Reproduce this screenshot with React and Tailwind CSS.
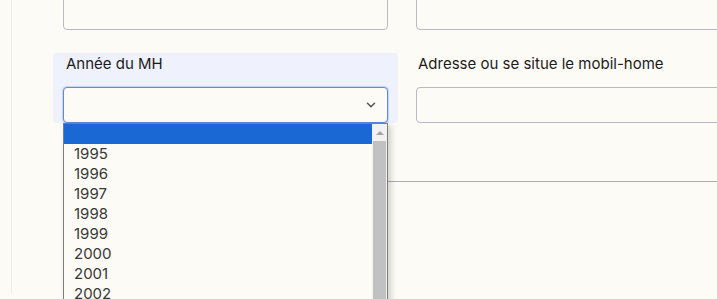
import { ChevronDown } from "lucide-react";

const years = ["", "1995", "1996", "1997", "1998", "1999", "2000", "2001", "2002", "2003", "2004"];

const App = () => {
  return (
    <div className="h-[299px] w-[717px] overflow-hidden bg-[#fcfbf5] font-['Inter','Noto_Sans',sans-serif] text-[15px] text-[#1c1c1c]">
      <div className="ml-[11px] h-full border-l border-[#efeee6] pl-[41px]">
        {/* top row */}
        <div className="-mt-[6px] flex gap-[8px]">
          <div className="w-[345px] shrink-0 px-[10px]">
            <div className="h-[36px] rounded-[4px] border border-[#b9b9c3] bg-[#fcfbf5]"></div>
          </div>
          <div className="w-[345px] shrink-0 px-[10px]">
            <div className="h-[36px] rounded-[4px] border border-[#b9b9c3] bg-[#fcfbf5]"></div>
          </div>
        </div>

        {/* second row */}
        <div className="mt-[23px] flex gap-[8px]">
          <div className="relative w-[345px] shrink-0 rounded-[3px] bg-[#eff2fc] px-[10px]">
            <div className="px-[3px] pt-[1px] leading-[20px]">Année du MH</div>
            <div className="mt-[13px] flex h-[36px] items-center justify-end rounded-[4px] border border-[#5c8ae6] bg-[#fcfbf5] pr-[9px] shadow-[0_0_0_1px_rgba(120,160,240,0.35)]">
              <ChevronDown size={14} strokeWidth={2.6} className="text-[#555]" />
            </div>
            <div className="absolute left-[10px] top-[70px] z-10 w-[325px] border border-[#7d7d7d] bg-[#fcfbf5] shadow-[3px_2px_6px_rgba(0,0,0,0.18)]">
              <div className="flex">
                <div className="flex-1">
                  {years.map((y, i) => (
                    <div
                      key={i}
                      className={`h-[20px] pl-[10px] text-[15px] leading-[20px] text-[#383838] ${i === 0 ? "bg-[#1a68d3]" : ""}`}
                    >
                      {y}
                    </div>
                  ))}
                </div>
                <div className="flex w-[15px] flex-col bg-[#f1f1f1]">
                  <div className="flex h-[17px] items-center justify-center">
                    <div className="h-0 w-0 border-x-[4px] border-b-[4px] border-x-transparent border-b-[#a3a3a3]"></div>
                  </div>
                  <div className="mx-[1px] flex-1 bg-[#c1c1c1]"></div>
                </div>
              </div>
            </div>
          </div>
          <div className="w-[345px] shrink-0 px-[10px]">
            <div className="px-[2px] pt-[1px] leading-[20px]">Adresse ou se situe le mobil-home</div>
            <div className="mt-[13px] h-[36px] rounded-[4px] border border-[#b9b9c3] bg-[#fcfbf5]"></div>
          </div>
        </div>

        {/* divider below */}
        <div className="ml-[10px] mt-[58px] border-t border-[#acacb0]"></div>
      </div>
    </div>
  );
};

export default App;
